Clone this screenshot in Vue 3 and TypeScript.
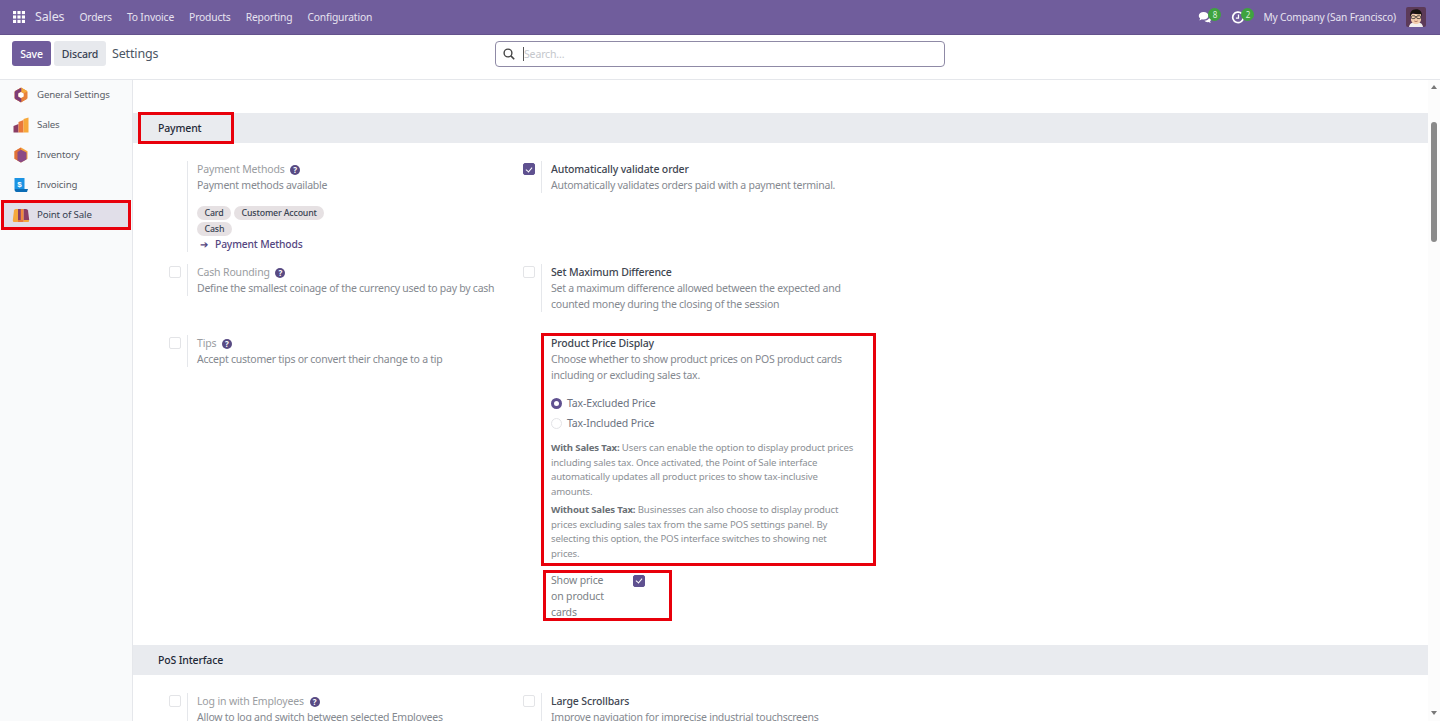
<script setup lang="ts">
const menus = ['Orders', 'To Invoice', 'Products', 'Reporting', 'Configuration']
const apps = ['General Settings', 'Sales', 'Inventory', 'Invoicing', 'Point of Sale']
</script>

<template>
  <div class="page">
    <header class="navbar">
      <svg class="apps-icon" viewBox="0 0 13 13" aria-hidden="true">
        <g fill="#fff">
          <rect x="0" y="0" width="3.4" height="3.4" /><rect x="4.8" y="0" width="3.4" height="3.4" /><rect x="9.6" y="0" width="3.4" height="3.4" />
          <rect x="0" y="4.8" width="3.4" height="3.4" /><rect x="4.8" y="4.8" width="3.4" height="3.4" /><rect x="9.6" y="4.8" width="3.4" height="3.4" />
          <rect x="0" y="9.6" width="3.4" height="3.4" /><rect x="4.8" y="9.6" width="3.4" height="3.4" /><rect x="9.6" y="9.6" width="3.4" height="3.4" />
        </g>
      </svg>
      <span class="brand">Sales</span>
      <nav class="menu">
        <a v-for="m in menus" :key="m">{{ m }}</a>
      </nav>
      <div class="systray">
        <span class="tray-item">
          <svg class="tray-icon" viewBox="0 0 14 13" aria-hidden="true">
            <path fill="#fff" d="M5.6 1C2.900 1 .8 2.600.8 4.700c0 1 .5 1.900 1.300 2.600L1.500 9.400l2.400-1.100c.5.1 1.100.2 1.700.2 2.700 0 4.800-1.700 4.800-3.800S8.300 1 5.600 1z" />
            <path fill="#fff" d="M11.400 6.500c-.5 2-2.600 3.200-5 3.300.7.900 2 1.400 3.300 1.400l.9-.1 2 1-.5-1.800c.7-.6 1.100-1.400 1.100-2.200 0-.6-.9-1.300-1.800-1.600z" />
          </svg>
          <b class="badge">8</b>
        </span>
        <span class="tray-item clock">
          <svg class="tray-icon" viewBox="0 0 13 13" aria-hidden="true">
            <path fill="none" stroke="#fff" stroke-width="1.700" d="M10.300 2.600A5.300 5.300 0 1 0 11.800 7" />
            <path fill="none" stroke="#fff" stroke-width="1.300" d="M7 3.600v3.600H4.400" />
          </svg>
          <b class="badge">2</b>
        </span>
        <span class="company">My Company (San Francisco)</span>
        <svg class="avatar" viewBox="0 0 20 20" aria-hidden="true">
          <rect width="20" height="20" rx="2" fill="#5c3a58" />
          <path fill="#f2f0ee" d="M3 20c.6-3.600 3-5 7-5s6.400 1.400 7 5z" />
          <path fill="#f3cfae" d="M5 7h10v5.500c0 2.600-2.300 4.500-5 4.500s-5-1.900-5-4.500z" />
          <path fill="#17130f" d="M4.300 9.500C3.600 5 6 2.200 10 2.200s6.500 2.600 5.700 7.300L14.800 7c-2.700.4-5.200.2-8-1-.7 1-1.700 2-2.500 3.500z" />
          <g fill="none" stroke="#2b2b2b" stroke-width=".8">
            <rect x="5.400" y="8.800" width="3.800" height="2.800" rx=".8" />
            <rect x="10.800" y="8.800" width="3.800" height="2.800" rx=".8" />
            <path d="M9.200 9.800h1.600" />
          </g>
          <path fill="none" stroke="#8a4a3a" stroke-width=".7" d="M8.300 14c1 .6 2.400.6 3.400 0" />
        </svg>
      </div>
    </header>

    <div class="control-panel">
      <div class="actions">
        <button type="button" class="btn btn-primary">Save</button>
        <button type="button" class="btn btn-secondary">Discard</button>
        <span class="crumb">Settings</span>
      </div>
      <div class="search">
        <svg class="search-icon" viewBox="0 0 12 12" aria-hidden="true">
          <circle cx="5" cy="5" r="3.900" fill="none" stroke="#444" stroke-width="1.400" />
          <path d="M7.900 7.900l3.300 3.300" stroke="#444" stroke-width="1.600" />
        </svg>
        <i class="caret"></i>
        <span class="placeholder">Search...</span>
      </div>
    </div>

    <div class="body">
      <aside class="sidebar">
        <div v-for="(app, i) in apps" :key="app" class="app-item" :class="{ active: i === 4 }">
          <svg v-if="i === 0" class="app-icon" viewBox="0 0 16 16" aria-hidden="true">
            <path fill="#e8813a" stroke="#e8813a" stroke-linejoin="round" d="M8 1l6 3.500v7L8 15l-6-3.500v-7z" />
            <path fill="#f5a93c" d="M8 .5l6.500 3.700L11 6.200 8 4.500z" />
            <path fill="#7d3c78" stroke="#7d3c78" stroke-linejoin="round" stroke-width=".6" d="M8 1.200L2 4.500v7L8 15v-3.500L5 9.800V6.200L8 4.500z" />
            <path fill="#fff" d="M8 5l2.700 1.500v3L8 11 5.300 9.500v-3z" />
          </svg>
          <svg v-else-if="i === 1" class="app-icon" viewBox="0 0 16 16" aria-hidden="true">
            <path fill="#8a3d64" d="M.5 9l5-2v8.500h-5z" />
            <path fill="#e9773a" d="M5.500 5l5-2v12.500h-5z" />
            <path fill="#f7a83b" d="M10.500 2l5-1.500v15h-5z" />
          </svg>
          <svg v-else-if="i === 2" class="app-icon" viewBox="0 0 16 16" aria-hidden="true">
            <path fill="#f4a13a" d="M8 .5l6.500 3.700v7.600L8 15.500l-6.500-3.700V4.200z" />
            <path fill="#e0703a" d="M1.500 4.200L8 .5v15l-6.500-3.700z" />
            <path fill="#8a4a86" d="M8 2.800l5.500 2.600v7.100L8 15.500l-3.500-2V5z" />
          </svg>
          <svg v-else-if="i === 3" class="app-icon" viewBox="0 0 16 16" aria-hidden="true">
            <path fill="#1b93e3" d="M1.500 1h10v11h-10z" />
            <path fill="#0b6cb5" d="M1.500 12h13.500l-1 3H3.500c-1.200 0-2-1.300-2-3z" />
            <text x="6.500" y="9.500" text-anchor="middle" font-size="8" font-weight="700" fill="#fff" font-family="'Liberation Sans', sans-serif">$</text>
          </svg>
          <svg v-else class="app-icon pos-icon" viewBox="0 0 18 16" aria-hidden="true">
            <path fill="#f6a83c" d="M.8 13L2 3.500Q2.200 2 3.800 2H6v11z" />
            <path fill="#8a3d64" d="M6 2h2.900v11H6z" />
            <path fill="#f0883c" d="M8.900 2h2.800v11H8.900z" />
            <path fill="#8a3d64" d="M11.700 2h2.300q1.700 0 2 1.500l1.200 9.500h-5.500z" />
            <path fill="#f6a83c" d="M.8 13H6v1.500q0 .5-.5.5H1.700q-.9 0-.9-2zM11.700 13h5.500q0 2-1 2h-3.900q-.6 0-.6-.5z" />
            <path fill="#e9773a" d="M6 13h5.700v1.500q0 .5-.6.5H6.600q-.6 0-.6-.5z" />
          </svg>
          <span>{{ app }}</span>
        </div>
      </aside>

      <main class="content">
        <section class="block first">
          <h2 class="block-title">
            Payment
            <span class="mark mark-title"></span>
          </h2>
          <div class="row row-one">
            <div class="box">
              <div class="box-left"></div>
              <div class="box-right">
                <div class="label muted">Payment Methods <span class="help">?</span></div>
                <div class="desc">Payment methods available</div>
                <div class="tags">
                  <span class="tag">Card</span>
                  <span class="tag">Customer Account</span>
                  <span class="tag">Cash</span>
                </div>
                <a class="link"><span class="arrow">➔</span>Payment Methods</a>
              </div>
            </div>
            <div class="box">
              <div class="box-left"><span class="check on"></span></div>
              <div class="box-right">
                <div class="label">Automatically validate order</div>
                <div class="desc">Automatically validates orders paid with a payment terminal.</div>
              </div>
            </div>
          </div>

          <div class="row row-two">
            <div class="box">
              <div class="box-left"><span class="check"></span></div>
              <div class="box-right">
                <div class="label muted">Cash Rounding <span class="help">?</span></div>
                <div class="desc">Define the smallest coinage of the currency used to pay by cash</div>
              </div>
            </div>
            <div class="box">
              <div class="box-left"><span class="check"></span></div>
              <div class="box-right">
                <div class="label">Set Maximum Difference</div>
                <div class="desc narrow">Set a maximum difference allowed between the expected and counted money during the closing of the session</div>
              </div>
            </div>
          </div>

          <div class="row row-three">
            <div class="box">
              <div class="box-left"><span class="check"></span></div>
              <div class="box-right">
                <div class="label muted">Tips <span class="help">?</span></div>
                <div class="desc">Accept customer tips or convert their change to a tip</div>
              </div>
            </div>
            <div class="box">
              <div class="box-left"></div>
              <div class="price-pane">
                <span class="mark mark-price"></span>
                <div class="label">Product Price Display</div>
                <div class="desc narrow">Choose whether to show product prices on POS product cards including or excluding sales tax.</div>
                <div class="radios">
                  <div class="radio-row"><span class="radio on"></span>Tax-Excluded Price</div>
                  <div class="radio-row"><span class="radio"></span>Tax-Included Price</div>
                </div>
                <p class="note"><b>With Sales Tax:</b> Users can enable the option to display product prices including sales tax. Once activated, the Point of Sale interface automatically updates all product prices to show tax-inclusive amounts.</p>
                <p class="note"><b>Without Sales Tax:</b> Businesses can also choose to display product prices excluding sales tax from the same POS settings panel. By selecting this option, the POS interface switches to showing net prices.</p>
                <div class="show-price">
                  <span class="mark mark-show"></span>
                  <span class="show-label">Show price on product cards</span>
                  <span class="check on"></span>
                </div>
              </div>
            </div>
          </div>
        </section>

        <section class="block">
          <h2 class="block-title">PoS Interface</h2>
          <div class="row row-last">
            <div class="box">
              <div class="box-left"><span class="check"></span></div>
              <div class="box-right">
                <div class="label muted">Log in with Employees <span class="help">?</span></div>
                <div class="desc">Allow to log and switch between selected Employees</div>
              </div>
            </div>
            <div class="box">
              <div class="box-left"><span class="check"></span></div>
              <div class="box-right">
                <div class="label">Large Scrollbars</div>
                <div class="desc">Improve navigation for imprecise industrial touchscreens</div>
              </div>
            </div>
          </div>
        </section>

        <div class="scrollbar" aria-hidden="true">
          <i class="arrow-up"></i>
          <i class="thumb"></i>
          <i class="arrow-down"></i>
        </div>
      </main>
    </div>
  </div>
</template>

<style scoped>
.page {
  height: 721px;
  display: flex;
  flex-direction: column;
  overflow: hidden;
  background: #fff;
  color: #374151;
  font-family: "Noto Sans", "Liberation Sans", sans-serif;
  font-size: 10.5px;
  letter-spacing: -0.15px;
  line-height: 16px;
}

.navbar {
  height: 35px;
  flex: none;
  display: flex;
  align-items: center;
  padding: 0 14px 0 13px;
  box-sizing: border-box;
  background: #705d9c;
  border-bottom: 1px solid #64528c;
  color: #e7e3f0;
}

.apps-icon {
  width: 12px;
  height: 12px;
}

.brand {
  margin-left: 10px;
  font-size: 12.5px;
}

.menu {
  display: flex;
  gap: 15px;
  margin-left: 15px;
  font-size: 10.3px;
}

.systray {
  margin-left: auto;
  display: flex;
  align-items: center;
}

.tray-item {
  position: relative;
  display: flex;
  width: 33px;
}

.tray-icon {
  width: 14px;
  height: 13px;
}

.badge {
  position: absolute;
  left: 10px;
  top: -3px;
  width: 13px;
  height: 13px;
  border-radius: 50%;
  background: #3fa33f;
  color: #d9f0d9;
  font-size: 8px;
  font-weight: 400;
  line-height: 13px;
  text-align: center;
}

.company {
  margin-left: -1px;
  font-size: 10.2px;
}

.avatar {
  width: 20px;
  height: 20px;
  margin-left: 10px;
}

.control-panel {
  height: 45px;
  flex: none;
  box-sizing: border-box;
  display: grid;
  grid-template-columns: 1fr 450px 1fr;
  align-items: center;
  padding: 0 0 7px;
  background: #fff;
  border-bottom: 1px solid #e5e7eb;
}

.actions {
  display: flex;
  align-items: center;
  padding-left: 12px;
}

.btn {
  height: 25px;
  border: 0;
  border-radius: 3px;
  font: inherit;
  letter-spacing: inherit;
  font-weight: 500;
  padding: 0;
}

.btn-primary {
  width: 39px;
  background: #705d9c;
  color: #fff;
}

.btn-secondary {
  width: 52px;
  margin-left: 3px;
  background: #e7e9ed;
  color: #374151;
}

.crumb {
  margin-left: 6px;
  font-size: 12.5px;
  color: #4b5563;
}

.search {
  height: 26px;
  box-sizing: border-box;
  display: flex;
  align-items: center;
  border: 1px solid #8f8aa6;
  border-radius: 4px;
  padding-left: 7px;
}

.search-icon {
  width: 12px;
  height: 12px;
}

.caret {
  width: 1px;
  height: 14px;
  margin-left: 8px;
  background: #555;
}

.placeholder {
  color: #c4c7cc;
}

.body {
  flex: 1;
  min-height: 0;
  display: flex;
}

.sidebar {
  width: 133px;
  flex: none;
  box-sizing: border-box;
  background: #f9fafb;
  border-right: 1px solid #e5e7eb;
}

.app-item {
  height: 30px;
  display: flex;
  align-items: center;
  gap: 8px;
  padding-left: 13px;
  box-sizing: border-box;
  font-size: 9.7px;
  color: #5b6068;
}

.app-item.active {
  margin: 0 1px;
  padding-left: 11px;
  background: #e1dfe9;
  outline: 3px solid #e8000b;
  outline-offset: -3px;
  color: #374151;
}

.app-icon {
  width: 16px;
  height: 16px;
  flex: none;
}

.pos-icon {
  width: 18px;
  margin-right: -1px;
}

.content {
  position: relative;
  flex: 1;
  min-width: 0;
  overflow: hidden;
  padding-right: 12px;
}

.block.first {
  padding-top: 33px;
}

.block-title {
  position: relative;
  height: 30px;
  margin: 0;
  padding-left: 25px;
  background: #e9ebef;
  color: #1f2937;
  font-size: 10.5px;
  font-weight: 500;
  line-height: 30px;
}

.mark {
  position: absolute;
  box-sizing: border-box;
  border: 3px solid #e8000b;
  pointer-events: none;
}

.mark-title {
  left: 5px;
  top: -1px;
  width: 96px;
  height: 32px;
}

.row {
  display: grid;
  grid-template-columns: 354px 354px;
  align-items: start;
  padding-top: 18px;
}

.row-two {
  padding-top: 12px;
  padding-bottom: 5px;
}

.row-three {
  padding-bottom: 25px;
}

.box {
  display: flex;
  align-items: stretch;
}

.box-left {
  width: 54px;
  flex: none;
  box-sizing: border-box;
  padding: 2px 6px 0 0;
  display: flex;
  justify-content: flex-end;
  align-items: flex-start;
}

.box-right {
  flex: 1;
  min-width: 0;
  box-sizing: border-box;
  padding-left: 9px;
  border-left: 1px solid #e5e7eb;
}

.label {
  font-weight: 500;
  color: #404651;
}

.label.muted {
  font-weight: 400;
  color: #9a9da1;
}

.help {
  display: inline-block;
  width: 10px;
  height: 10px;
  margin-left: 3px;
  border-radius: 50%;
  background: #584a83;
  color: #fff;
  font-size: 8px;
  font-weight: 700;
  line-height: 10px;
  text-align: center;
  letter-spacing: 0;
}

.desc {
  color: #858990;
  letter-spacing: -0.25px;
  white-space: nowrap;
}

.desc.narrow {
  width: 305px;
  white-space: normal;
}

.tags {
  display: flex;
  flex-wrap: wrap;
  gap: 2px 3px;
  width: 150px;
  margin-top: 13px;
}

.tag {
  height: 14px;
  padding: 0 7.500px;
  border-radius: 7px;
  background: #e6e1e3;
  color: #374151;
  font-size: 8.800px;
  font-weight: 500;
  line-height: 14px;
}

.link {
  display: block;
  color: #54467f;
  font-weight: 500;
  font-size: 10.300px;
}

.arrow {
  display: inline-block;
  width: 18px;
  padding-left: 3px;
  box-sizing: border-box;
}

.check {
  width: 10px;
  height: 10px;
  border: 1px solid #e3e4e7;
  border-radius: 2px;
  background: #fff;
  display: block;
  position: relative;
}

.check.on {
  background: #5f5190;
  border-color: #5f5190;
}

.check.on::after {
  content: "";
  position: absolute;
  left: 3px;
  top: 1.500px;
  width: 3px;
  height: 5px;
  border: solid #fff;
  border-width: 0 1.300px 1.300px 0;
  transform: rotate(40deg);
}

.price-pane {
  position: relative;
  flex: 1;
  box-sizing: border-box;
  padding-left: 10px;
}

.mark-price {
  left: 0;
  top: -2px;
  width: 335px;
  height: 233px;
}

.radios {
  margin-top: 10px;
}

.radio-row {
  display: flex;
  align-items: center;
  height: 20px;
  color: #6b7280;
}

.radio {
  width: 9px;
  height: 9px;
  margin-right: 5px;
  border: 1px solid #e3e4e7;
  border-radius: 50%;
}

.radio.on {
  box-sizing: border-box;
  width: 11px;
  height: 11px;
  border: 3px solid #5f5190;
}

.note {
  width: 305px;
  margin: 0 0 3px;
  color: #8c9095;
  font-size: 9.600px;
  line-height: 14.700px;
}

.note:first-of-type {
  margin-top: 8px;
}

.note b {
  color: #6b7076;
  font-weight: 700;
}

.show-price {
  position: relative;
  display: flex;
  align-items: flex-start;
  margin-top: 10px;
  color: #7b7f85;
}

.show-label {
  width: 82px;
  flex: none;
  box-sizing: border-box;
  padding-right: 22px;
}

.show-price .check {
  margin-top: 3px;
}

.mark-show {
  left: -8px;
  top: -2px;
  width: 129px;
  height: 51px;
}

.scrollbar {
  position: absolute;
  top: 0;
  right: 0;
  bottom: 0;
  width: 12px;
  background: #fcfcfc;
}

.arrow-up,
.arrow-down {
  position: absolute;
  left: 3px;
  width: 0;
  height: 0;
  border-left: 3.500px solid transparent;
  border-right: 3.500px solid transparent;
}

.arrow-up {
  top: 5px;
  border-bottom: 4px solid #777;
}

.arrow-down {
  bottom: 6px;
  border-top: 4px solid #777;
}

.thumb {
  position: absolute;
  left: 3px;
  top: 42px;
  width: 6px;
  height: 120px;
  border-radius: 3px;
  background: #8a8a8a;
}
</style>

<style>
html,
body {
  margin: 0;
  overflow: hidden;
}
</style>
